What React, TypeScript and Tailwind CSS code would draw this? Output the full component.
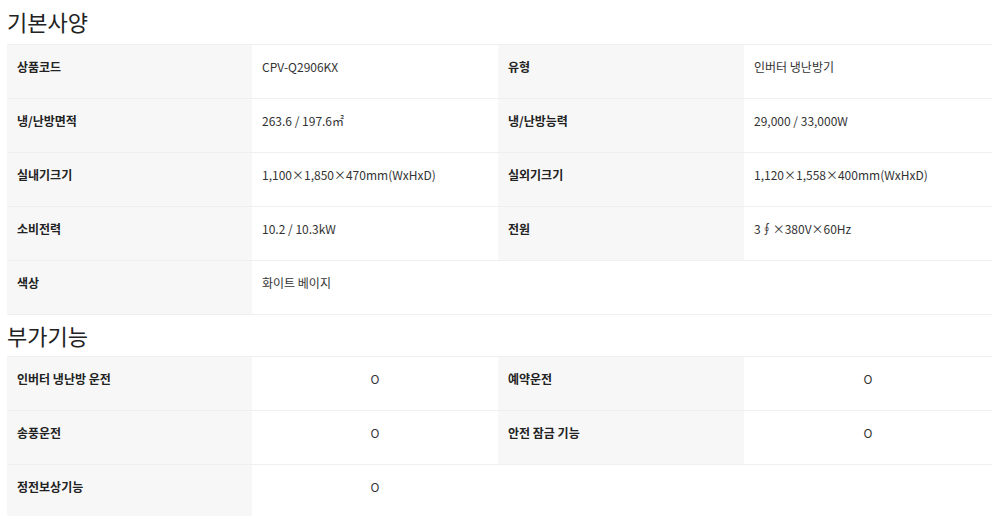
import React from "react";

const font = { fontFamily: '"Noto Sans CJK KR", "Noto Sans", sans-serif' };

type Cell = { label: string; value: string } | null;

function Row({ cells, center }: { cells: [Cell, Cell]; center?: boolean }) {
  return (
    <div className="grid grid-cols-[245px_246px_246px_248px] border-b border-[#efefef]">
      {cells.map((c, i) =>
        c ? (
          <React.Fragment key={i}>
            <div className="h-[53px] bg-[#f7f7f7] pl-[10px] pt-[13px] text-[12px] leading-[18px] font-bold text-[#222]">
              {c.label}
            </div>
            <div
              className={
                "h-[53px] pl-[10px] pt-[13px] text-[12px] leading-[18px] text-[#333] " +
                (center ? "text-center pr-[10px]" : "")
              }
            >
              {c.value}
            </div>
          </React.Fragment>
        ) : (
          <React.Fragment key={i}>
            <div className="h-[53px]" />
            <div className="h-[53px]" />
          </React.Fragment>
        )
      )}
    </div>
  );
}

export default function App() {
  return (
    <div className="w-[1000px] h-[516px] overflow-hidden bg-white px-[7px]" style={font}>
      <h2 className="h-[44px] flex items-center pb-[2px] text-[22px] font-normal text-[#222]">기본사양</h2>
      <div className="w-[985px] border-t border-[#efefef]">
        <Row cells={[{ label: "상품코드", value: "CPV-Q2906KX" }, { label: "유형", value: "인버터 냉난방기" }]} />
        <Row cells={[{ label: "냉/난방면적", value: "263.6 / 197.6㎡" }, { label: "냉/난방능력", value: "29,000 / 33,000W" }]} />
        <Row cells={[{ label: "실내기크기", value: "1,100×1,850×470mm(WxHxD)" }, { label: "실외기크기", value: "1,120×1,558×400mm(WxHxD)" }]} />
        <Row cells={[{ label: "소비전력", value: "10.2 / 10.3kW" }, { label: "전원", value: "3∮×380V×60Hz" }]} />
        <Row cells={[{ label: "색상", value: "화이트 베이지" }, null]} />
      </div>
      <h2 className="h-[41px] flex items-center text-[22px] font-normal text-[#222]">부가기능</h2>
      <div className="w-[985px] border-t border-[#efefef]">
        <Row center cells={[{ label: "인버터 냉난방 운전", value: "O" }, { label: "예약운전", value: "O" }]} />
        <Row center cells={[{ label: "송풍운전", value: "O" }, { label: "안전 잠금 기능", value: "O" }]} />
        <Row center cells={[{ label: "정전보상기능", value: "O" }, null]} />
      </div>
    </div>
  );
}
